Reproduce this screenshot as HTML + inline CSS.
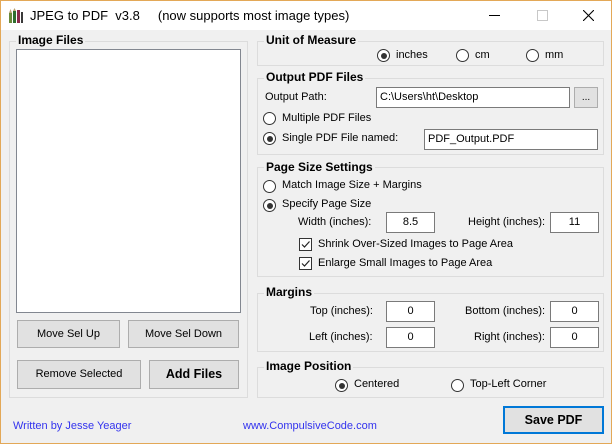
<!DOCTYPE html>
<html><head><meta charset="utf-8"><style>
*{box-sizing:border-box;margin:0;padding:0}
body{width:612px;height:444px;overflow:hidden;background:#f0f0f0;font-family:"Liberation Sans",Arial,sans-serif;font-size:11px;color:#000;position:relative}
.win{position:absolute;left:0;top:0;width:612px;height:444px;border:1px solid #e3a857;}
.tb{position:absolute;left:1px;top:1px;width:610px;height:29px;background:#fff}
.a{position:absolute;white-space:nowrap}
.g{position:absolute;border:1px solid #dcdcdc}
.gt{position:absolute;background:#f0f0f0;font-weight:bold;font-size:12px;padding:0 2px;line-height:14px}
.tx{position:absolute;background:#fff;border:1px solid #7a7a7a;line-height:19px;padding:0 3px}
.btn{position:absolute;background:#e1e1e1;border:1px solid #adadad;text-align:center;font-size:11px}
.r{position:absolute;width:13px;height:13px;border:1px solid #333;border-radius:50%;background:#fff}
.r.on::after{content:"";position:absolute;left:2.5px;top:2.5px;width:6px;height:6px;border-radius:50%;background:#333}
.c{position:absolute;width:13px;height:13px;border:1px solid #333;background:#fff}
</style></head><body>
<div class="win"></div>
<div class="tb"></div>
<svg class="a" style="left:8px;top:8px" width="16" height="16" viewBox="0 0 16 16">
<rect x="1" y="5" width="3" height="10" fill="#6a8a3a"/><rect x="5" y="3" width="3" height="12" fill="#2f6e2f"/><rect x="9" y="2" width="3" height="13" fill="#8a2a4a"/><rect x="13" y="4" width="2" height="11" fill="#3a3a3a"/>
<polygon points="1,5 2.5,1 4,5" fill="#b8a070"/><polygon points="5,3 6.5,0 8,3" fill="#b8a070"/></svg>
<div class="a" style="left:30px;top:8px;font-size:13px;color:#000">JPEG to PDF&nbsp; v3.8&nbsp;&nbsp;&nbsp;&nbsp; (now supports most image types)</div>
<div class="a" style="left:489px;top:15px;width:11px;height:1px;background:#000"></div>
<div class="a" style="left:537px;top:10px;width:11px;height:11px;border:1px solid #c8c8c8"></div>
<svg class="a" style="left:583px;top:10px" width="11" height="11"><path d="M0 0L11 11M11 0L0 11" stroke="#000" stroke-width="1.1"/></svg>

<div class="g" style="left:9px;top:41px;width:239px;height:357px"></div>
<div class="gt" style="left:16px;top:33px">Image Files</div>
<div class="a" style="left:16px;top:49px;width:225px;height:264px;background:#fff;border:1px solid #828790"></div>
<div class="btn" style="left:17px;top:320px;width:103px;height:28px;line-height:26px">Move Sel Up</div>
<div class="btn" style="left:128px;top:320px;width:111px;height:28px;line-height:26px">Move Sel Down</div>
<div class="btn" style="left:17px;top:360px;width:124px;height:29px;line-height:27px">Remove Selected</div>
<div class="btn" style="left:149px;top:360px;width:90px;height:29px;line-height:27px;font-weight:bold;font-size:12.5px">Add Files</div>

<div class="g" style="left:257px;top:41px;width:347px;height:25px"></div>
<div class="gt" style="left:264px;top:33px">Unit of Measure</div>
<div class="r on" style="left:377px;top:49px"></div><div class="a" style="left:396px;top:49px">inches</div>
<div class="r" style="left:456px;top:49px"></div><div class="a" style="left:475px;top:49px">cm</div>
<div class="r" style="left:526px;top:49px"></div><div class="a" style="left:545px;top:49px">mm</div>

<div class="g" style="left:257px;top:78px;width:347px;height:77px"></div>
<div class="gt" style="left:264px;top:70px">Output PDF Files</div>
<div class="a" style="left:265px;top:91px">Output Path:</div>
<div class="tx" style="left:376px;top:87px;width:194px;height:21px">C:\Users\ht\Desktop</div>
<div class="btn" style="left:574px;top:87px;width:24px;height:21px;line-height:19px;font-size:10px">...</div>
<div class="r" style="left:263px;top:112px"></div><div class="a" style="left:282px;top:112px">Multiple PDF Files</div>
<div class="r on" style="left:263px;top:132px"></div><div class="a" style="left:282px;top:132px">Single PDF File named:</div>
<div class="tx" style="left:424px;top:129px;width:174px;height:21px">PDF_Output.PDF</div>

<div class="g" style="left:257px;top:167px;width:347px;height:110px"></div>
<div class="gt" style="left:264px;top:160px">Page Size Settings</div>
<div class="r" style="left:263px;top:180px"></div><div class="a" style="left:282px;top:179px">Match Image Size + Margins</div>
<div class="r on" style="left:263px;top:199px"></div><div class="a" style="left:282px;top:198px">Specify Page Size</div>
<div class="a" style="left:298px;top:216px">Width (inches):</div>
<div class="tx" style="left:386px;top:212px;width:49px;height:21px;text-align:center">8.5</div>
<div class="a" style="left:468px;top:216px">Height (inches):</div>
<div class="tx" style="left:550px;top:212px;width:49px;height:21px;text-align:center">11</div>
<div class="c" style="left:299px;top:238px"></div><svg class="a" style="left:300px;top:239px" width="11" height="11"><path d="M2 5.5L4.5 8L9.5 2.5" stroke="#222" fill="none" stroke-width="1.2"/></svg>
<div class="a" style="left:318px;top:238px">Shrink Over-Sized Images to Page Area</div>
<div class="c" style="left:299px;top:257px"></div><svg class="a" style="left:300px;top:258px" width="11" height="11"><path d="M2 5.5L4.5 8L9.5 2.5" stroke="#222" fill="none" stroke-width="1.2"/></svg>
<div class="a" style="left:318px;top:257px">Enlarge Small Images to Page Area</div>

<div class="g" style="left:257px;top:293px;width:347px;height:59px"></div>
<div class="gt" style="left:264px;top:285px">Margins</div>
<div class="a" style="left:310px;top:305px">Top (inches):</div>
<div class="tx" style="left:386px;top:301px;width:49px;height:21px;text-align:center">0</div>
<div class="a" style="left:465px;top:305px">Bottom (inches):</div>
<div class="tx" style="left:550px;top:301px;width:49px;height:21px;text-align:center">0</div>
<div class="a" style="left:309px;top:331px">Left (inches):</div>
<div class="tx" style="left:386px;top:327px;width:49px;height:21px;text-align:center">0</div>
<div class="a" style="left:474px;top:331px">Right (inches):</div>
<div class="tx" style="left:550px;top:327px;width:49px;height:21px;text-align:center">0</div>

<div class="g" style="left:257px;top:367px;width:347px;height:31px"></div>
<div class="gt" style="left:264px;top:359px">Image Position</div>
<div class="r on" style="left:335px;top:379px"></div><div class="a" style="left:354px;top:378px">Centered</div>
<div class="r" style="left:451px;top:379px"></div><div class="a" style="left:470px;top:378px">Top-Left Corner</div>

<div class="btn" style="left:503px;top:406px;width:101px;height:28px;border:2px solid #0078d7;line-height:24px;font-weight:bold;font-size:12.5px">Save PDF</div>
<div class="a" style="left:13px;top:420px;color:#3333ee">Written by Jesse Yeager</div>
<div class="a" style="left:243px;top:420px;color:#3333ee">www.CompulsiveCode.com</div>
</body></html>
